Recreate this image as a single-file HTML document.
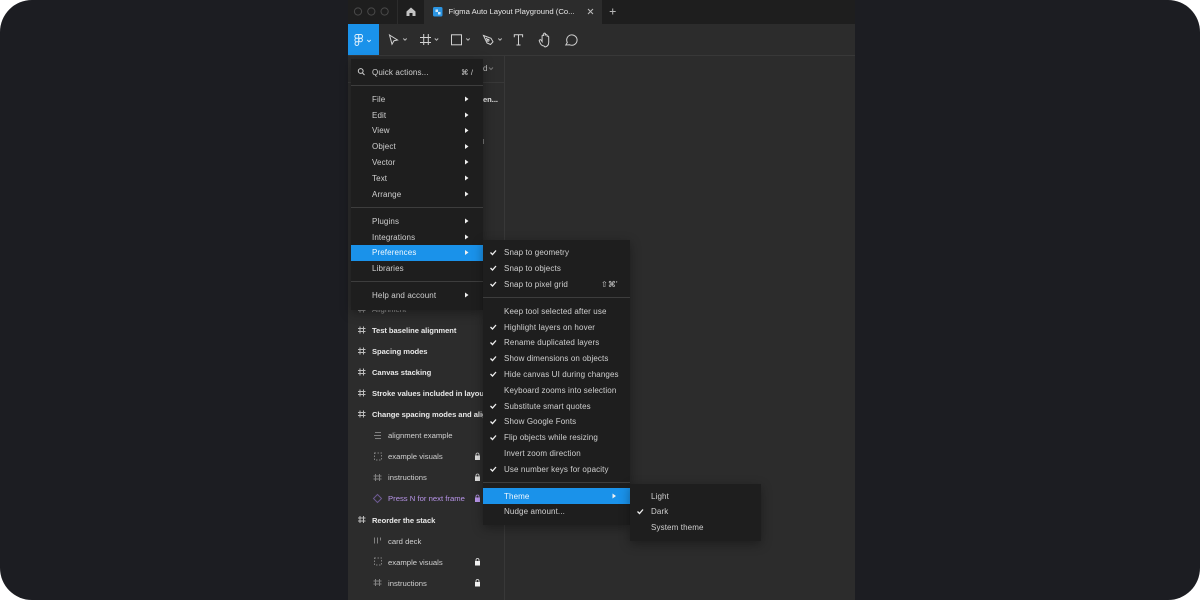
<!DOCTYPE html>
<html><head><meta charset="utf-8"><style>
html,body{margin:0;padding:0;width:1200px;height:600px;overflow:hidden;background:#fff}
#o{position:absolute;left:0;top:0;width:1200px;height:600px;background:#1c1d22;border-radius:32px;overflow:hidden}
#s{position:absolute;left:348px;top:0;width:507px;height:600px;background:#2c2c2c;overflow:hidden}
.b{position:absolute}
.t{position:absolute;margin-top:.6px;font:8px/12px "Liberation Sans",sans-serif;letter-spacing:.12px;color:#d0d0d0;white-space:nowrap}
.l{font-size:7.7px;letter-spacing:0}
.w{font-weight:bold;font-size:7.6px;letter-spacing:-.05px;color:#e8e8e8}
svg{position:absolute;overflow:visible}
.m{position:absolute;background:#1e1e1e;box-shadow:0 3px 10px rgba(0,0,0,.35)}
.d{position:absolute;height:1px;background:#3d3d3d}
.h{position:absolute;background:#1a92ea}
</style></head><body><div id="o"><div id="s"></div>

<!-- tab bar -->
<div class="b" style="left:348px;top:0;width:507px;height:24px;background:#1e1e1e"></div>
<div class="b" style="left:397px;top:0;width:1px;height:24px;background:#2c2c2c"></div>
<div class="b" style="left:424px;top:0;width:178px;height:24px;background:#2c2c2c"></div>
<svg style="left:0;top:0" width="1200" height="60" fill="none">
<circle cx="358" cy="11.500" r="3.600" stroke="#4a4a4a"/><circle cx="371.300" cy="11.500" r="3.600" stroke="#4a4a4a"/><circle cx="384.600" cy="11.500" r="3.600" stroke="#4a4a4a"/>
<path d="M411 7.500l-4.500 4v4.500h3v-3h3v3h3v-4.500z" fill="#c4c4c4"/>
<rect x="433" y="7" width="9.500" height="9.500" rx="1.500" fill="#2b95e3"/><path d="M435.500 9.500h2.500v2.500h-2.500zM438 12h2.500v2.500h-2.500z" fill="#cfe8fa"/>
<path d="M588 9l5 5M593 9l-5 5" stroke="#bdbdbd"/>
<path d="M612.700 8.500v6M609.700 11.500h6" stroke="#b5b5b5"/>
</svg>
<div class="t" style="left:448.500px;top:5.500px;color:#e6e6e6;font-size:7.7px;letter-spacing:0">Figma Auto Layout Playground (Co...</div>

<!-- toolbar -->
<div class="b" style="left:348px;top:24px;width:31px;height:32px;background:#1a92ea"></div>
<div class="b" style="left:348px;top:55px;width:507px;height:1px;background:#383838"></div>
<svg style="left:0;top:0" width="1200" height="60" fill="none" stroke="#d2d2d2" stroke-width="1">
<g stroke="#dff0fc"><path d="M358.700 34.500h-2a1.850 1.850 0 0 0 0 3.700h2zM358.700 34.500h2a1.850 1.850 0 0 1 0 3.700h-2zM358.700 38.200h-2a1.800 1.800 0 0 0 0 3.600h2zM358.700 41.800h-2a1.850 1.850 0 1 0 2 1.850z"/><circle cx="360.600" cy="40" r="1.800"/><path d="M367.300 40l1.700 1.700 1.700-1.700" stroke-width=".9"/></g>
<path d="M389.500 35l8 5-3.500.7-2 3.500z"/><path d="M403.300 38.500l1.700 1.700 1.700-1.700M434.800 38.500l1.700 1.700 1.700-1.700M466.300 38.500l1.700 1.700 1.700-1.700M498.300 38.500l1.700 1.700 1.700-1.700" stroke="#bdbdbd"/>
<path d="M423.700 34v11M428.300 34v11M420 37.500h11M420 42.500h11"/>
<rect x="451.500" y="34.800" width="10" height="10"/>
<path d="M483.500 35.500l7.500 2.800 2 3.500-2.500 2.700-3.500-1.500zM486 38l2 2"/><circle cx="488" cy="40.300" r="1"/>
<path d="M514.300 37.200v-2.500h8.300v2.500M518.500 34.700v10.300M516.500 45h4"/>
<path d="M544 46c-2.500-.3-3.500-1.500-4.700-5-.4-1.100 1.200-1.900 1.900-.8l.9 1.300v-5.500c0-1.200 1.500-1.200 1.600 0v-2c0-1.200 1.700-1.200 1.700 0v1.500c0-1.100 1.700-1.100 1.700 0v1.300c0-1 1.600-1 1.600 .2v5.500c0 2.500-1.500 4-3.700 4.500z"/>
<path d="M565.800 45l1.500-2.500a5.200 5.200 0 1 1 2.500 2.300z"/>
</svg>

<!-- layers panel -->
<div class="b" style="left:504px;top:56px;width:1px;height:544px;background:#383838"></div>
<div class="b" style="left:348px;top:82px;width:156px;height:1px;background:#383838"></div>
<div class="t" style="left:483px;top:62px;color:#c8c8c8">d</div>
<svg style="left:0;top:0" width="1200" height="600" fill="none">
<path d="M489 67.500l2 2 2-2" stroke="#777"/>
<path d="M483 139v5" stroke="#777" stroke-width="2"/>
<path d="M360 305.500v7M363.500 305.500v7M358 307.500h7.500M358 310.500h7.500" stroke="#8a8a8a"/>
<path stroke="#bcbcbc" d="M360 326.500v7M363.500 326.500v7M358 328.500h7.500M358 331.500h7.500M360 347.500v7M363.500 347.500v7M358 349.500h7.500M358 352.500h7.500M360 368.500v7M363.500 368.500v7M358 370.500h7.500M358 373.500h7.500M360 389.500v7M363.500 389.500v7M358 391.500h7.500M358 394.500h7.500M360 410.500v7M363.500 410.500v7M358 412.500h7.500M358 415.500h7.500M360 516v7M363.500 516v7M358 518h7.500M358 521h7.500"/>
<g stroke="#808080"><path d="M375 432.500h6M374 435.500h7M375 438.500h6"/>
<rect x="374.500" y="453" width="7" height="7" stroke-dasharray="1.500 1.500"/><rect x="374.500" y="558" width="7" height="7" stroke-dasharray="1.500 1.500"/>
<path d="M375.500 474v7M379.500 474v7M373.500 476h8M373.500 479h8M375.500 579v7M379.500 579v7M373.500 581h8M373.500 584h8"/>
<path d="M374.500 537.500v6M377.500 537.500v6M380.500 537.500v3"/></g>
<path d="M377.500 494.500l4 4-4 4-4-4z" stroke="#6d5a92"/>
<rect x="475" y="455.500" width="5" height="4.500" fill="#dcdcdc"/><path d="M476 455.500v-1a1.500 1.500 0 0 1 3 0v1" stroke="#dcdcdc" stroke-width=".8"/>
<rect x="475" y="476.500" width="5" height="4.500" fill="#dcdcdc"/><path d="M476 476.500v-1a1.500 1.500 0 0 1 3 0v1" stroke="#dcdcdc" stroke-width=".8"/>
<rect x="475" y="497.500" width="5" height="4.500" fill="#b794e8"/><path d="M476 497.500v-1a1.500 1.500 0 0 1 3 0v1" stroke="#b794e8" stroke-width=".8"/>
<rect x="475" y="561" width="5" height="4.500" fill="#f0f0f0"/><path d="M476 561v-1a1.500 1.500 0 0 1 3 0v1" stroke="#f0f0f0" stroke-width=".8"/>
<rect x="475" y="582" width="5" height="4.500" fill="#f0f0f0"/><path d="M476 582v-1a1.500 1.500 0 0 1 3 0v1" stroke="#f0f0f0" stroke-width=".8"/>
</svg>
<div class="t l" style="left:372px;top:303px;color:#9a9a9a">Alignment</div>
<div class="t w" style="left:372px;top:324px">Test baseline alignment</div>
<div class="t w" style="left:372px;top:345px">Spacing modes</div>
<div class="t w" style="left:372px;top:366px">Canvas stacking</div>
<div class="t w" style="left:372px;top:387px">Stroke values included in layout</div>
<div class="t w" style="left:372px;top:408px">Change spacing modes and alignment</div>
<div class="t l" style="left:388px;top:429px">alignment example</div>
<div class="t l" style="left:388px;top:450px">example visuals</div>
<div class="t l" style="left:388px;top:471px">instructions</div>
<div class="t l" style="left:388px;top:492px;color:#b794e8">Press N for next frame</div>
<div class="t w" style="left:372px;top:514px">Reorder the stack</div>
<div class="t l" style="left:388px;top:535px">card deck</div>
<div class="t l" style="left:388px;top:556px">example visuals</div>
<div class="t l" style="left:388px;top:577px">instructions</div>
<div class="t w" style="left:483px;top:93px">en...</div>

<!-- main menu -->
<div class="m" style="left:351px;top:59px;width:132px;height:251px"></div>
<div class="d" style="left:351px;top:85px;width:132px"></div>
<div class="d" style="left:351px;top:207px;width:132px"></div>
<div class="d" style="left:351px;top:281px;width:132px"></div>
<div class="h" style="left:351px;top:244.500px;width:132px;height:16px"></div>
<svg style="left:0;top:0;z-index:3" width="1200" height="600" fill="none">
<circle cx="360.700" cy="71" r="2.400" stroke="#d0d0d0"/><path d="M362.500 73l2 2" stroke="#d0d0d0"/>
<path d="M465 96.500l3.500 2.500-3.500 2.500zM465 112.500l3.500 2.500-3.500 2.500zM465 128l3.500 2.500-3.500 2.500zM465 144l3.500 2.500-3.500 2.500zM465 159.500l3.500 2.500-3.500 2.500zM465 175.500l3.500 2.500-3.500 2.500zM465 191.500l3.500 2.500-3.500 2.500zM465 218.500l3.500 2.500-3.500 2.500zM465 234.500l3.500 2.500-3.500 2.500zM465 250l3.500 2.500-3.500 2.500zM465 292.500l3.500 2.500-3.500 2.500zM612.500 493.500l3.500 2.500-3.500 2.500z" fill="#f0f0f0"/>
<path d="M490.500 252.500l2 2 3.500-4M490.500 268l2 2 3.500-4M490.500 284l2 2 3.500-4M490.500 327l2 2 3.500-4M490.500 342.500l2 2 3.500-4M490.500 358.500l2 2 3.500-4M490.500 374l2 2 3.500-4M490.500 406l2 2 3.500-4M490.500 421.500l2 2 3.500-4M490.500 437.500l2 2 3.500-4M490.500 469l2 2 3.500-4M637.500 511.500l2 2 3.500-4" stroke="#f0f0f0" stroke-width="1.300"/>
</svg>
<div style="position:absolute;left:0;top:0;z-index:3">
<div class="t" style="left:372px;top:66px">Quick actions...</div>
<div class="t" style="left:461px;top:66px;font-size:7.5px">⌘ /</div>
<div class="t" style="left:372px;top:93px">File</div>
<div class="t" style="left:372px;top:109px">Edit</div>
<div class="t" style="left:372px;top:124.500px">View</div>
<div class="t" style="left:372px;top:140px">Object</div>
<div class="t" style="left:372px;top:156px">Vector</div>
<div class="t" style="left:372px;top:172px">Text</div>
<div class="t" style="left:372px;top:188px">Arrange</div>
<div class="t" style="left:372px;top:215px">Plugins</div>
<div class="t" style="left:372px;top:231px">Integrations</div>
<div class="t" style="left:372px;top:246.500px;color:#f0f8fe">Preferences</div>
<div class="t" style="left:372px;top:262px">Libraries</div>
<div class="t" style="left:372px;top:289px">Help and account</div>
</div>

<!-- preferences menu -->
<div class="m" style="left:483px;top:240px;width:147px;height:285px;z-index:2"></div>
<div class="d" style="left:483px;top:297px;width:147px;z-index:2"></div>
<div class="d" style="left:483px;top:482px;width:147px;z-index:2"></div>
<div class="h" style="left:483px;top:488px;width:147px;height:16px;z-index:2"></div>
<div class="m" style="left:630px;top:484px;width:131px;height:57px;z-index:2"></div>
<div style="position:absolute;left:0;top:0;z-index:3">
<div class="t" style="left:504px;top:246px">Snap to geometry</div>
<div class="t" style="left:504px;top:262px">Snap to objects</div>
<div class="t" style="left:504px;top:278px">Snap to pixel grid</div>
<div class="t" style="left:601px;top:278px">⇧⌘'</div>
<div class="t" style="left:504px;top:305px">Keep tool selected after use</div>
<div class="t" style="left:504px;top:321px">Highlight layers on hover</div>
<div class="t" style="left:504px;top:336.500px">Rename duplicated layers</div>
<div class="t" style="left:504px;top:352px">Show dimensions on objects</div>
<div class="t" style="left:504px;top:368px">Hide canvas UI during changes</div>
<div class="t" style="left:504px;top:384px">Keyboard zooms into selection</div>
<div class="t" style="left:504px;top:400px">Substitute smart quotes</div>
<div class="t" style="left:504px;top:415.500px">Show Google Fonts</div>
<div class="t" style="left:504px;top:431px">Flip objects while resizing</div>
<div class="t" style="left:504px;top:447px">Invert zoom direction</div>
<div class="t" style="left:504px;top:463px">Use number keys for opacity</div>
<div class="t" style="left:504px;top:490px;color:#f0f8fe">Theme</div>
<div class="t" style="left:504px;top:505.500px">Nudge amount...</div>
<div class="t" style="left:651px;top:490px">Light</div>
<div class="t" style="left:651px;top:505.500px">Dark</div>
<div class="t" style="left:651px;top:521px">System theme</div>
</div>
</div></body></html>
